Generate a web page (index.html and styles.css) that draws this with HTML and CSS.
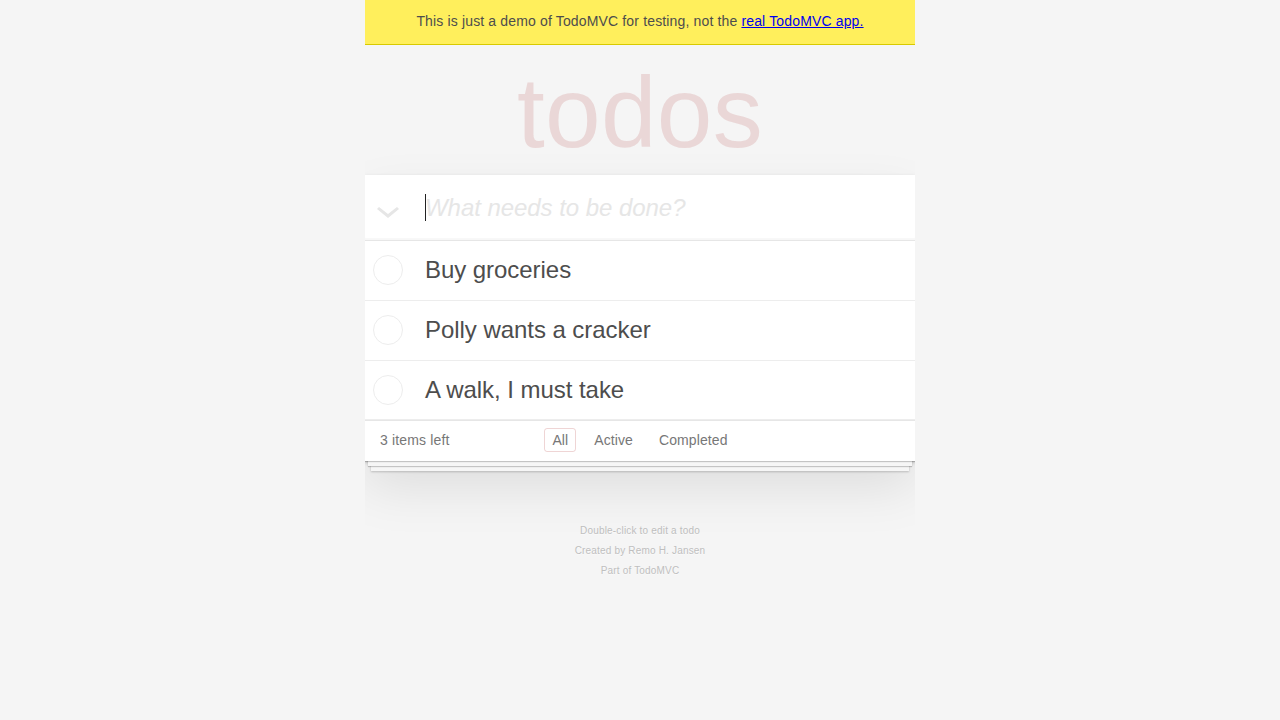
FILE: index.html
```html
<!DOCTYPE html>
<html lang="en">
<head>
<meta charset="utf-8">
<title>React • TodoMVC</title>
<link rel="stylesheet" href="styles.css">
</head>
<body>
<div class="demo-banner">This is just a demo of TodoMVC for testing, not the <a href="#">real TodoMVC app.</a></div>
<section class="todoapp">
  <header class="header">
    <h1 class="title">todos</h1>
    <div class="new-row">
      <label class="toggle-all" aria-label="Mark all as complete">
        <svg width="24" height="14" viewBox="0 0 24 14"><path d="M1 3 L3 1 L12 8 L21 1 L23 3 L12 12 Z" fill="#e6e6e6"/></svg>
      </label>
      <input class="new-todo" placeholder="What needs to be done?" autofocus>
      <span class="caret"></span>
    </div>
  </header>
  <section class="main">
    <ul class="todo-list">
      <li class="todo">
        <span class="toggle"></span>
        <label class="todo-label">Buy groceries</label>
      </li>
      <li class="todo">
        <span class="toggle"></span>
        <label class="todo-label">Polly wants a cracker</label>
      </li>
      <li class="todo">
        <span class="toggle"></span>
        <label class="todo-label">A walk, I must take</label>
      </li>
    </ul>
  </section>
  <footer class="footer">
    <span class="todo-count"><strong>3</strong> items left</span>
    <ul class="filters">
      <li><a class="filter selected" href="#/">All</a></li>
      <li><a class="filter" href="#/active">Active</a></li>
      <li><a class="filter" href="#/completed">Completed</a></li>
    </ul>
  </footer>
</section>
<footer class="info">
  <p>Double-click to edit a todo</p>
  <p>Created by <a href="#">Remo H. Jansen</a></p>
  <p>Part of <a href="#">TodoMVC</a></p>
</footer>
</body>
</html>
```
FILE: styles.css
```css
html, body { margin: 0; padding: 0; }
body {
  font: 14px "Liberation Sans", Arial, sans-serif;
  line-height: 1.4em;
  background: #f5f5f5;
  color: #4d4d4d;
  min-width: 230px;
  max-width: 550px;
  margin: 0 auto;
  letter-spacing: 0.15px;
  -webkit-font-smoothing: antialiased;
}
.demo-banner {
  background: #ffef5c;
  border-bottom: 1px solid #d8ca00;
  padding: 11px 10px 13px;
  line-height: 20px;
  text-align: center;
  color: #4d4d4d;
}
.demo-banner a { color: #0000ee; text-decoration: underline; }

.todoapp {
  background: #fff;
  margin: 130px 0 40px 0;
  position: relative;
  box-shadow: 0 2px 4px 0 rgba(0,0,0,0.2), 0 25px 50px 0 rgba(0,0,0,0.1);
}
.title {
  position: absolute;
  top: -133px;
  width: 100%;
  margin: 0;
  font-size: 100px;
  line-height: 140px;
  font-weight: 100;
  letter-spacing: 0.3px;
  text-align: center;
  color: rgba(175,47,47,0.15);
}
.new-row {
  position: relative;
  display: flex;
  box-shadow: inset 0 -2px 1px rgba(0,0,0,0.03);
}
.toggle-all {
  position: absolute;
  left: 0;
  top: 0;
  width: 45px;
  height: 65px;
  display: flex;
  align-items: center;
  justify-content: center;
  padding-top: 10px;
  box-sizing: border-box;
}
.toggle-all svg { display: block; margin-left: 1px; }
.new-todo {
  flex: 1;
  margin: 0;
  padding: 16px 16px 16px 60px;
  height: 65px;
  box-sizing: border-box;
  border: none;
  background: transparent;
  font-family: inherit;
  font-size: 24px;
  line-height: 1.4em;
  letter-spacing: -0.05px;
  color: inherit;
  outline: none;
  caret-color: transparent;
}
.new-todo::placeholder { font-style: italic; color: #e6e6e6; font-weight: 300; }
.caret {
  position: absolute;
  left: 60px;
  top: 19px;
  width: 1px;
  height: 27px;
  background: #222;
}

.main { border-top: 1px solid #e6e6e6; }
.todo-list { margin: 0; padding: 0; list-style: none; }
.todo {
  display: flex;
  align-items: center;
  border-bottom: 1px solid #ededed;
  font-size: 24px;
  letter-spacing: -0.05px;
}
.toggle {
  flex: none;
  width: 28px;
  height: 28px;
  border: 1px solid #ededed;
  border-radius: 50%;
  margin-left: 8px;
}
.todo-label {
  flex: 1;
  padding: 15px 60px 15px 15px;
  margin-left: 7px;
  line-height: 1.2;
  color: #4d4d4d;
  word-break: break-all;
}

.footer {
  position: relative;
  color: #777;
  padding: 9px 15px 11px;
  height: 20px;
  border-top: 1px solid #e6e6e6;
  display: flex;
  align-items: center;
}
.footer::before {
  content: "";
  position: absolute;
  right: 0; bottom: 0; left: 0;
  height: 50px;
  overflow: hidden;
  box-shadow: 0 1px 1px rgba(0,0,0,0.2),
              0 8px 0 -3px #f6f6f6,
              0 9px 1px -3px rgba(0,0,0,0.2),
              0 16px 0 -6px #f6f6f6,
              0 17px 2px -6px rgba(0,0,0,0.2);
}
.todo-count { position: relative; text-align: left; }
.todo-count strong { font-weight: 300; }
.filters {
  position: absolute;
  left: 0; right: 0;
  margin: 0; padding: 0;
  list-style: none;
  text-align: center;
  letter-spacing: 0.1px;
}
.filters li { display: inline; }
.filter {
  color: inherit;
  margin: 3px;
  padding: 3px 7px;
  text-decoration: none;
  border: 1px solid transparent;
  border-radius: 3px;
}
.filter.selected { border-color: rgba(175,47,47,0.2); }

.info {
  margin: 65px auto 0;
  color: #bfbfbf;
  font-size: 10px;
  letter-spacing: 0.18px;
  text-shadow: 0 1px 0 rgba(255,255,255,0.5);
  text-align: center;
}
.info p { line-height: 1; margin: 10px 0; }
.info a { color: inherit; text-decoration: none; font-weight: 400; }
```
